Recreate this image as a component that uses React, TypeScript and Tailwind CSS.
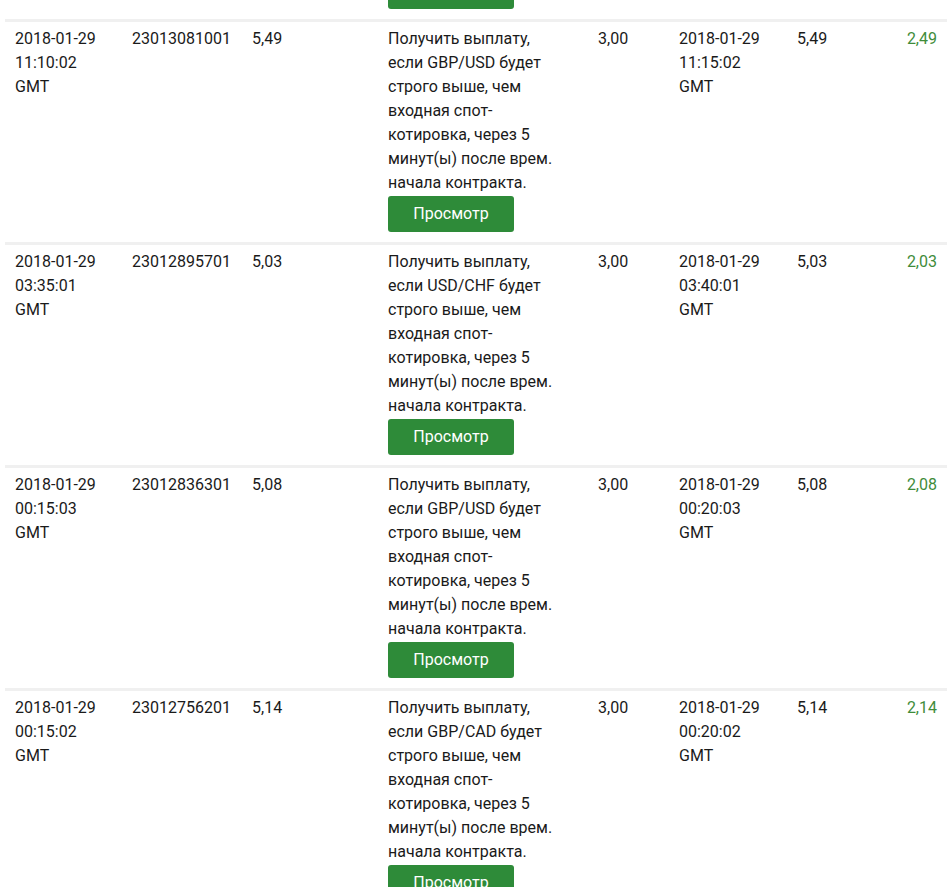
import React from "react";

type Row = {
    start: [string, string];
    id: string;
    price: string;
    pair: string;
    stake: string;
    end: [string, string];
    payout: string;
    profit: string;
};

const rows: Row[] = [
    {
        start: ["2018-01-29", "11:20:02"],
        id: "23013100001",
        price: "5,49",
        pair: "GBP/USD",
        stake: "3,00",
        end: ["2018-01-29", "11:25:02"],
        payout: "5,49",
        profit: "2,49",
    },
    {
        start: ["2018-01-29", "11:10:02"],
        id: "23013081001",
        price: "5,49",
        pair: "GBP/USD",
        stake: "3,00",
        end: ["2018-01-29", "11:15:02"],
        payout: "5,49",
        profit: "2,49",
    },
    {
        start: ["2018-01-29", "03:35:01"],
        id: "23012895701",
        price: "5,03",
        pair: "USD/CHF",
        stake: "3,00",
        end: ["2018-01-29", "03:40:01"],
        payout: "5,03",
        profit: "2,03",
    },
    {
        start: ["2018-01-29", "00:15:03"],
        id: "23012836301",
        price: "5,08",
        pair: "GBP/USD",
        stake: "3,00",
        end: ["2018-01-29", "00:20:03"],
        payout: "5,08",
        profit: "2,08",
    },
    {
        start: ["2018-01-29", "00:15:02"],
        id: "23012756201",
        price: "5,14",
        pair: "GBP/CAD",
        stake: "3,00",
        end: ["2018-01-29", "00:20:02"],
        payout: "5,14",
        profit: "2,14",
    },
];

function Stamp({ parts }: { parts: [string, string] }) {
    return (
        <div className="w-[90px]">
            {parts[0]}
            <br />
            {parts[1]}
            <br />
            GMT
        </div>
    );
}

export default function App() {
    return (
        <div
            className="min-h-screen bg-white overflow-hidden pl-[5px] text-[16px] leading-6 text-[#1a1a1a]"
            style={{ fontFamily: "Roboto, 'Liberation Sans', sans-serif" }}
        >
            {/* first row only peeks in: its button tail shows at the top */}
            <div className="-mt-[204px]">
                {rows.map((r) => (
                    <div
                        key={r.id}
                        className="grid grid-cols-[117px_120px_136px_210px_81px_118px_1fr_80px] border-t-[3px] border-[#f0f0f0] pt-[5px] pb-[10px]"
                    >
                        <div className="pl-[10px]">
                            <Stamp parts={r.start} />
                        </div>
                        <div className="pl-[10px]">{r.id}</div>
                        <div className="pl-[10px]">{r.price}</div>
                        <div className="pl-[10px]">
                            <p className="w-[172px]">
                                Получить выплату, если {r.pair} будет строго выше, чем входная спот-котировка, через 5
                                минут(ы) после врем. начала контракта.
                            </p>
                            <button className="mt-px h-9 w-[126px] rounded-[3px] bg-[#2e8b39] text-white">
                                Просмотр
                            </button>
                        </div>
                        <div className="pl-[10px]">{r.stake}</div>
                        <div className="pl-[10px]">
                            <Stamp parts={r.end} />
                        </div>
                        <div className="pl-[10px]">{r.payout}</div>
                        <div className="pr-[10px] text-right text-[#3f8c3a]">{r.profit}</div>
                    </div>
                ))}
            </div>
        </div>
    );
}
